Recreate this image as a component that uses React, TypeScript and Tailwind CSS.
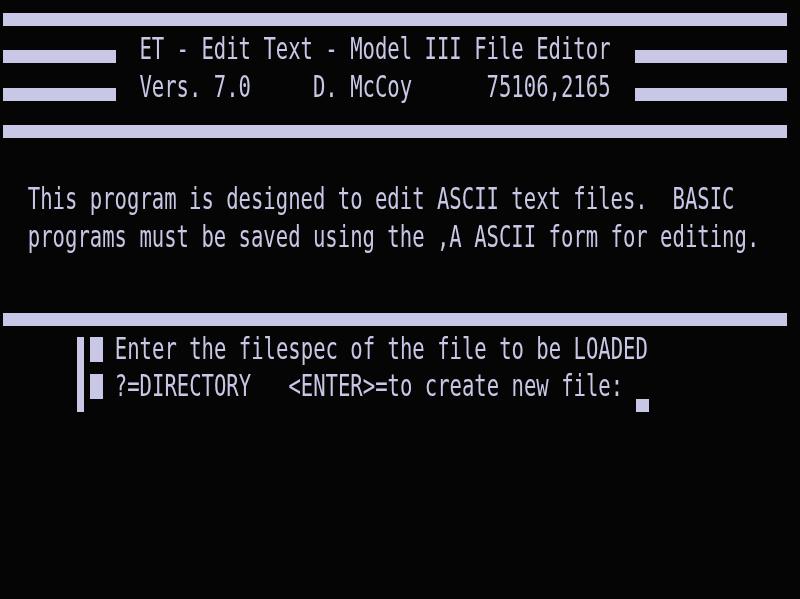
import React from 'react'

// TRS-80 Model III screen: 64 columns x 16 rows, 12.4px x 37.44px cells
const bar = 'mt-[13px] h-[13px] bg-[#c8c8e6] shrink-0'
const text =
  "block whitespace-pre font-['DejaVu_Sans_Mono','Liberation_Mono',monospace] text-[20.6px] leading-none text-[#c8c8e6] origin-top scale-y-[1.42] -mt-[2px] shrink-0"

function Row({ children }: { children?: React.ReactNode }) {
  return <div className="flex h-[37.44px] items-start pl-[3px]">{children}</div>
}

export default function App() {
  return (
    <div className="w-[800px] h-[599px] overflow-hidden bg-[#050505] blur-[0.4px]">
      <Row>
        <div className={`${bar} w-[784px]`} />
      </Row>
      <Row>
        <div className={`${bar} w-[113px]`} />
        <span className={`${text} ml-[23.4px] w-[471.2px]`}>ET - Edit Text - Model III File Editor</span>
        <div className={`${bar} ml-[24.4px] w-[152px]`} />
      </Row>
      <Row>
        <div className={`${bar} w-[113px]`} />
        <span className={`${text} ml-[23.4px] w-[471.2px]`}>Vers. 7.0     D. McCoy      75106,2165</span>
        <div className={`${bar} ml-[24.4px] w-[152px]`} />
      </Row>
      <Row>
        <div className={`${bar} w-[784px]`} />
      </Row>
      <Row />
      <Row>
        <span className={`${text} ml-[24.8px]`}>This program is designed to edit ASCII text files.  BASIC</span>
      </Row>
      <Row>
        <span className={`${text} ml-[24.8px]`}>programs must be saved using the ,A ASCII form for editing.</span>
      </Row>
      <Row />
      <Row>
        <div className={`${bar} w-[784px]`} />
      </Row>

      {/* prompt box, rows 9-10 */}
      <div className="flex h-[74.88px] pl-[77.4px]">
        <div className="w-[7px] h-full bg-[#c8c8e6]" />
        <div className="ml-[5.4px] flex flex-col">
          <div className="flex h-[37.44px] items-start">
            <div className="w-[13px] h-[25px] bg-[#c8c8e6] shrink-0" />
            <span className={`${text} ml-[12px]`}>Enter the filespec of the file to be LOADED</span>
          </div>
          <div className="flex h-[37.44px] items-start">
            <div className="w-[13px] h-[25px] bg-[#c8c8e6] shrink-0" />
            <span className={`${text} ml-[12px]`}>?=DIRECTORY   {'<ENTER>'}=to create new file: </span>
            <div className="mt-[25px] w-[13px] h-[13px] bg-[#c8c8e6] shrink-0" />
          </div>
        </div>
      </div>
    </div>
  )
}
